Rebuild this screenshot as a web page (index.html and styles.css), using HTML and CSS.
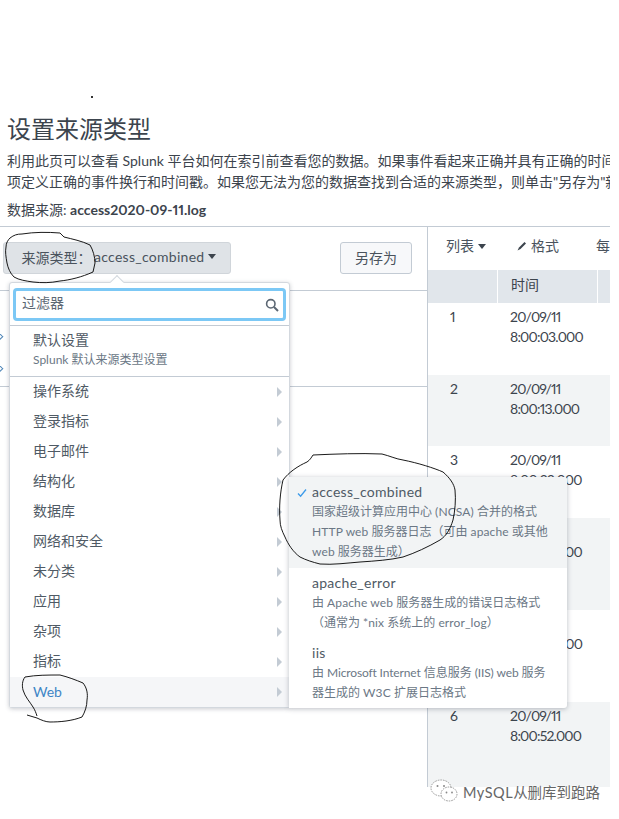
FILE: index.html
```html
<!DOCTYPE html>
<html lang="zh">
<head>
<meta charset="utf-8">
<title>设置来源类型</title>
<link rel="stylesheet" href="styles.css">
</head>
<body>
<div class="page">
  <span class="speck"></span>
  <h1 class="title">设置来源类型</h1>
  <p class="intro">利用此页可以查看 Splunk 平台如何在索引前查看您的数据。如果事件看起来正确并具有正确的时间戳，请单击"下一步"继续。否则，请从下拉菜单中选择<br>项定义正确的事件换行和时间戳。如果您无法为您的数据查找到合适的来源类型，则单击"另存为"新建来源类型。</p>
  <p class="source">数据来源: <b>access2020-09-11.log</b></p>
  <div class="workspace">
    <section class="settings">
      <div class="settings-bar">
        <button class="type-btn"><span class="type-label">来源类型：</span><span class="lat">access_combined</span><i class="caret"></i></button>
        <button class="save-btn">另存为</button>
      </div>
      <div class="settings-rows">
        <span class="chev"></span>
        <span class="chev"></span>
      </div>
    </section>
    <section class="results">
      <div class="toolbar">
        <span class="tool tool-list">列表<i class="caret small"></i></span>
        <span class="tool tool-format"><svg class="pencil" viewBox="0 0 10 10"><path d="M0.5 9.5 L2 6.5 L7.5 1 L9 2.5 L3.5 8 Z" fill="#3c444d"/></svg>格式</span>
        <span class="tool">每</span>
      </div>
      <div class="thead">
        <span class="col-n"></span><span class="col-t">时间</span><span class="col-x"></span>
      </div>
      <div class="row h72"><span class="col-n">1</span><span class="col-t">20/09/11<br>8:00:03.000</span></div>
      <div class="row h72 alt"><span class="col-n">2</span><span class="col-t">20/09/11<br>8:00:13.000</span></div>
      <div class="row h72"><span class="col-n">3</span><span class="col-t">20/09/11<br>8:00:23.000</span></div>
      <div class="row h92 alt"><span class="col-n">4</span><span class="col-t">20/09/11<br>8:00:33.000</span></div>
      <div class="row h92"><span class="col-n">5</span><span class="col-t">20/09/11<br>8:00:43.000</span></div>
      <div class="row h86 alt"><span class="col-n">6</span><span class="col-t">20/09/11<br>8:00:52.000</span></div>
    </section>

    <div class="menu">
      <span class="menu-arrow"></span>
      <div class="filter-wrap">
        <div class="filter"><span class="filter-text">过滤器</span>
          <svg class="search" viewBox="0 0 14 14"><circle cx="5.8" cy="5.8" r="4.2" fill="none" stroke="#5c6773" stroke-width="1.6"/><path d="M9 9 L13 13" stroke="#5c6773" stroke-width="2"/></svg>
        </div>
      </div>
      <div class="default-item"><div class="item-name">默认设置</div><div class="item-desc">Splunk 默认来源类型设置</div></div>
      <ul class="cats">
        <li>操作系统</li><li>登录指标</li><li>电子邮件</li><li>结构化</li><li>数据库</li>
        <li>网络和安全</li><li>未分类</li><li>应用</li><li>杂项</li><li>指标</li>
        <li class="active">Web</li>
      </ul>
    </div>

    <div class="submenu">
      <div class="sub-item selected">
        <svg class="check" viewBox="0 0 10 10"><path d="M1 5.5 L3.6 8.2 L9 1.5" fill="none" stroke="#3d9bea" stroke-width="1.3"/></svg>
        <div class="sub-name lat">access_combined</div>
        <div class="sub-desc">国家超级计算应用中心 <span class="lat">(NCSA)</span> 合并的格式<br><span class="lat">HTTP web</span> 服务器日志（可由 <span class="lat">apache</span> 或其他<br><span class="lat">web</span> 服务器生成）</div>
      </div>
      <div class="sub-item">
        <div class="sub-name lat">apache_error</div>
        <div class="sub-desc">由 <span class="lat">Apache web</span> 服务器生成的错误日志格式<br>（通常为 <span class="lat">*nix</span> 系统上的 <span class="lat">error_log</span>）</div>
      </div>
      <div class="sub-item">
        <div class="sub-name lat">iis</div>
        <div class="sub-desc">由 <span class="tight">Microsoft Internet</span> 信息服务 <span class="tight">(IIS) web</span> 服务<br>器生成的 <span class="lat">W3C</span> 扩展日志格式</div>
      </div>
    </div>
  </div>
</div>

<svg class="ink" viewBox="0 0 619 819">
  <path d="M10 238 C14 235 17 234 22 234 C34 232 48 232 60 233 L64 237 C72 239 82 241 90 245 C93 250 95 257 95 263 L93 272 C82 277 70 280 60 281 C50 283 42 283 33 282 C26 281 19 280 14 277 C10 273 8 268 7 263 C6 257 5 252 6 247 C6 243 8 240 10 238 Z"/>
  <path d="M313 455 C335 454 360 453 382 454 C390 456 396 459 403 460 C418 463 434 468 443 472 C450 478 454 484 455 490 C456 500 455 511 453 520 C450 530 446 536 440 540 C428 547 415 553 403 557 C390 560 375 561 360 562 C347 563 333 565 320 564 C312 562 306 560 300 557 C293 552 288 544 285 537 C282 531 280 526 280 520 C279 507 280 493 283 480 C289 472 298 466 307 462 C310 460 311 458 313 455 Z"/>
  <path d="M27 715 L37 718 C41 720 46 722 50 722 C60 722 72 721 82 717 C85 712 87 706 87 700 C88 694 87 688 83 683 C76 680 68 677 60 675 C48 675 36 675 25 677 C22 681 22 686 23 690 C25 697 30 702 33 707 C35 710 36 713 37 716"/>
</svg>

<div class="watermark">
  <svg class="wechat" viewBox="0 0 28 24"><ellipse cx="11" cy="9" rx="10" ry="8" fill="#fff" stroke="#9a9a9a" stroke-dasharray="1.6 1"/><ellipse cx="19" cy="15" rx="8" ry="7" fill="#fff" stroke="#9a9a9a" stroke-dasharray="1.6 1"/><circle cx="7.5" cy="7" r="1" fill="#888"/><circle cx="14" cy="7" r="1" fill="#888"/><circle cx="16.5" cy="13.5" r=".9" fill="#888"/><circle cx="22" cy="13.5" r=".9" fill="#888"/></svg>
  <span><span class="mysql">MySQL</span>从删库到跑路</span>
</div>
</body>
</html>
```

FILE: styles.css
```css
* { box-sizing: border-box; }
html, body { margin: 0; padding: 0; background: #fff; }
body {
  width: 619px;
  height: 819px;
  overflow: hidden;
  position: relative;
  font-family: "Lato", "Noto Sans CJK SC", sans-serif;
  font-size: 14px;
  color: #3c444d;
  font-variant-numeric: proportional-nums;
}
.lat { letter-spacing: .28px; }
.tight { letter-spacing: -.15px; }
.page {
  width: 610px;
  height: 787px;
  overflow: hidden;
  position: relative;
  padding-top: 112px;
}
.speck {
  position: absolute;
  left: 91px;
  top: 96px;
  width: 2px;
  height: 2px;
  background: #333;
}
.title {
  margin: 0 0 0 7px;
  font-size: 24px;
  font-weight: 400;
  line-height: 34px;
  color: #3c444d;
}
.intro {
  margin: 4px 0 0 7px;
  font-size: 14px;
  line-height: 21px;
  white-space: nowrap;
}
.source {
  margin: 8px 0 0 7px;
  line-height: 20px;
  height: 26px;
}
.source b { font-weight: 700; }

.workspace {
  position: relative;
  display: flex;
  border-top: 1px solid #c3cbd4;
  height: 561px;
}
.settings {
  width: 428px;
  flex: none;
  border-right: 1px solid #c3cbd4;
}
.settings-bar {
  height: 64px;
  padding: 15px 15px 0 3px;
  display: flex;
  justify-content: space-between;
  align-items: flex-start;
  border-bottom: 1px solid #c3cbd4;
}
.type-btn, .save-btn {
  font: inherit;
  color: #4a535d;
  height: 32px;
  border-radius: 3px;
  border: 1px solid #d0d5da;
  padding: 0 0 3px;
}
.type-btn {
  width: 228px;
  background: #dfe3e7;
  display: flex;
  align-items: center;
  padding-left: 15px;
}
.type-label { width: 75px; }
.save-btn {
  width: 72px;
  background: #f7f8fa;
  border-color: #c3cbd4;
}
.caret {
  display: inline-block;
  margin-left: 4px;
  border-left: 4px solid transparent;
  border-right: 4px solid transparent;
  border-top: 5px solid #3c444d;
}
.caret.small { vertical-align: 2px; }
.settings-rows {
  height: 96px;
  border-bottom: 1px solid #c3cbd4;
  display: flex;
  flex-direction: column;
  gap: 26px;
  padding-top: 43px;
}
.chev {
  display: block;
  width: 5px;
  height: 6px;
  margin-left: -3px;
  border-top: 1px solid #4f86b8;
  border-right: 1px solid #4f86b8;
  transform: rotate(45deg);
}

.results { flex: 1; min-width: 0; }
.toolbar {
  height: 43px;
  display: flex;
  align-items: center;
  padding: 0 0 8px 18px;
  white-space: nowrap;
  color: #4a535d;
}
.tool-list { width: 72px; }
.tool-format { width: 80px; }
.pencil { width: 10px; height: 10px; margin-right: 4px; }
.thead {
  height: 33px;
  background: #e1e6eb;
  display: flex;
  align-items: center;
}
.col-n { width: 69px; flex: none; padding-left: 22px; }
.col-t { width: 101px; flex: none; padding-left: 13px; line-height: 20px; letter-spacing: -.8px; }
.thead .col-t {
  align-self: stretch;
  display: flex;
  align-items: center;
  padding-bottom: 3px;
  letter-spacing: 0;
  border-left: 1px solid #fff;
  border-right: 1px solid #fff;
}
.row {
  display: flex;
  padding-top: 4px;
  line-height: 20px;
}
.h72 { height: 71.5px; }
.h92 { height: 92px; }
.h86 { height: 86px; }
.alt { background: #f2f4f5; }

.menu {
  position: absolute;
  left: 9px;
  top: 55px;
  width: 281px;
  height: 426px;
  background: #fff;
  border: 1px solid #d3d8de;
  border-radius: 3px;
  box-shadow: 0 1px 4px rgba(60, 70, 85, .28);
  color: #4f5a65;
}
.menu-arrow {
  position: absolute;
  left: 102px;
  top: -6px;
  width: 10px;
  height: 10px;
  background: #fff;
  border-left: 1px solid #d3d8de;
  border-top: 1px solid #d3d8de;
  transform: rotate(45deg);
}
.filter-wrap {
  position: relative;
  padding: 5px 3px 4px;
  height: 43px;
  border-bottom: 1px solid #c3cbd4;
}
.filter {
  height: 33px;
  border: 3px solid #7cc8f5;
  border-radius: 4px;
  display: flex;
  align-items: center;
  justify-content: space-between;
  padding: 0 4px 0 6px;
  color: #5c6773;
}
.filter-text { line-height: 20px; padding-bottom: 4px; }
.search { width: 14px; height: 14px; }
.default-item {
  height: 51px;
  padding: 3px 0 0 23px;
  border-bottom: 1px solid #c3cbd4;
}
.item-name { line-height: 21px; }
.item-desc { font-size: 12px; line-height: 20px; color: #6b7785; }
.cats { list-style: none; margin: 0; padding: 0; }
.cats li {
  position: relative;
  height: 30px;
  line-height: 28px;
  padding-left: 23px;
}
.cats li::after {
  content: "";
  position: absolute;
  right: 7px;
  top: 10px;
  border-top: 5px solid transparent;
  border-bottom: 5px solid transparent;
  border-left: 5px solid #c3cbd4;
}
.cats li.active { background: #f5f6f8; color: #3d85c6; line-height: 30px; }

.submenu {
  position: absolute;
  left: 289px;
  top: 250px;
  width: 278px;
  height: 231px;
  background: #fff;
  border-radius: 0 3px 3px 0;
  box-shadow: 0 1px 5px rgba(60, 70, 85, .35);
  color: #4f5a65;
  white-space: nowrap;
}
.sub-item { position: relative; padding: 5px 0 5px 23px; }
.sub-item.selected { background: #f2f4f5; height: 91px; border-radius: 0 3px 0 0; }
.check { position: absolute; left: 8px; top: 11px; width: 10px; height: 10px; }
.sub-name { line-height: 20px; }
.sub-desc { font-size: 12px; line-height: 20px; color: #6b7785; }
.sub-desc .lat { letter-spacing: .12px; }

.ink {
  position: absolute;
  left: 0;
  top: 0;
  width: 619px;
  height: 819px;
  pointer-events: none;
}
.ink path { fill: none; stroke: #000; stroke-width: .9; }

.watermark {
  position: absolute;
  left: 430px;
  top: 779px;
  display: flex;
  align-items: center;
  gap: 5px;
  font-size: 14.5px;
  color: #666;
  text-shadow: 0 0 2px #fff, 0 0 2px #fff;
}
.mysql { letter-spacing: .5px; }
.wechat { width: 28px; height: 24px; }
```
